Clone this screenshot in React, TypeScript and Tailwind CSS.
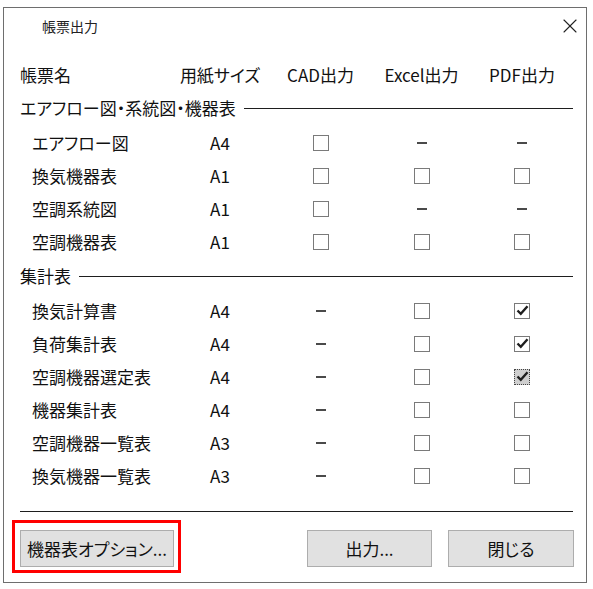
import { X } from "lucide-react";

type Cell = "box" | "dash" | "checked" | "focus";

type Row = {
  name: string;
  size: string;
  cad: Cell;
  excel: Cell;
  pdf: Cell;
};

const sections: { title: string; rows: Row[] }[] = [
  {
    title: "エアフロー図・系統図・機器表",
    rows: [
      { name: "エアフロー図", size: "A4", cad: "box", excel: "dash", pdf: "dash" },
      { name: "換気機器表", size: "A1", cad: "box", excel: "box", pdf: "box" },
      { name: "空調系統図", size: "A1", cad: "box", excel: "dash", pdf: "dash" },
      { name: "空調機器表", size: "A1", cad: "box", excel: "box", pdf: "box" },
    ],
  },
  {
    title: "集計表",
    rows: [
      { name: "換気計算書", size: "A4", cad: "dash", excel: "box", pdf: "checked" },
      { name: "負荷集計表", size: "A4", cad: "dash", excel: "box", pdf: "checked" },
      { name: "空調機器選定表", size: "A4", cad: "dash", excel: "box", pdf: "focus" },
      { name: "機器集計表", size: "A4", cad: "dash", excel: "box", pdf: "box" },
      { name: "空調機器一覧表", size: "A3", cad: "dash", excel: "box", pdf: "box" },
      { name: "換気機器一覧表", size: "A3", cad: "dash", excel: "box", pdf: "box" },
    ],
  },
];

const gridCols = "grid grid-cols-[150px_100px_101px_101px_100px]";

function Check() {
  return (
    <svg width="13" height="13" viewBox="0 0 13 13" fill="none">
      <path d="M1.5 6.5 L4.8 9.8 L11.5 2.3" stroke="#1e1e1e" strokeWidth="2.4" />
    </svg>
  );
}

function CellView({ kind }: { kind: Cell }) {
  if (kind === "dash") {
    return <div className="w-[10px] h-[2px] bg-[#4a4a4a]" />;
  }
  if (kind === "focus") {
    return (
      <div className="w-[16px] h-[16px] border border-dotted border-[#444] bg-[#cfcfcf] flex items-center justify-center">
        <Check />
      </div>
    );
  }
  return (
    <div className="w-[16px] h-[16px] border border-[#7a7a7a] bg-white flex items-center justify-center">
      {kind === "checked" && <Check />}
    </div>
  );
}

function Button({ label, width }: { label: string; width: string }) {
  return (
    <button
      type="button"
      className={`${width} h-[37px] bg-[#e1e1e1] border border-[#adadad] text-[17px] text-[#111] flex items-center justify-center`}
    >
      {label}
    </button>
  );
}

export default function App() {
  return (
    <div className="w-[593px] h-[589px] bg-white pt-[7px] pl-[3px] font-['Noto_Sans_CJK_JP',sans-serif] [font-feature-settings:'palt'] text-[#111]">
      <div className="w-[584px] h-[576px] border border-[#6e6e6e] bg-white flex flex-col">
        {/* title bar */}
        <div className="h-[36px] flex items-center justify-between pl-[38px] pr-[4px]">
          <span className="text-[14px] text-[#222]">帳票出力</span>
          <X size={24} strokeWidth={1.1} className="text-[#222]" />
        </div>

        <div className="pl-[16px] pr-[13px] mt-[16px]">
          {/* header */}
          <div className={`${gridCols} h-[30px] items-center text-[17px]`}>
            <span>帳票名</span>
            <span className="text-center">用紙サイズ</span>
            <span className="text-center">CAD出力</span>
            <span className="text-center">Excel出力</span>
            <span className="text-center">PDF出力</span>
          </div>

          {sections.map((section) => (
            <div key={section.title}>
              <div className="h-[36px] flex items-center gap-[8px] text-[17px]">
                <span className="whitespace-nowrap">{section.title}</span>
                <div className="flex-1 h-px bg-[#1e1e1e]" />
              </div>
              {section.rows.map((row) => (
                <div
                  key={row.name}
                  className={`${gridCols} h-[33px] items-center text-[17px]`}
                >
                  <span className="pl-[12px] whitespace-nowrap">{row.name}</span>
                  <span className="text-center">{row.size}</span>
                  <div className="flex justify-center">
                    <CellView kind={row.cad} />
                  </div>
                  <div className="flex justify-center">
                    <CellView kind={row.excel} />
                  </div>
                  <div className="flex justify-center">
                    <CellView kind={row.pdf} />
                  </div>
                </div>
              ))}
            </div>
          ))}

          <div className="mt-[19px] h-px bg-[#1e1e1e]" />
        </div>

        {/* footer */}
        <div className="flex items-start mt-[8px] pl-[8px] pr-[12px]">
          <div className="border-[3px] border-[#ff0000] pt-[7px] pb-[3px] pl-[5px] pr-[4px]">
            <Button label="機器表オプション..." width="w-[154px]" />
          </div>
          <div className="ml-auto mt-[10px] flex gap-[16px]">
            <Button label="出力..." width="w-[125px]" />
            <Button label="閉じる" width="w-[126px]" />
          </div>
        </div>
      </div>
    </div>
  );
}
